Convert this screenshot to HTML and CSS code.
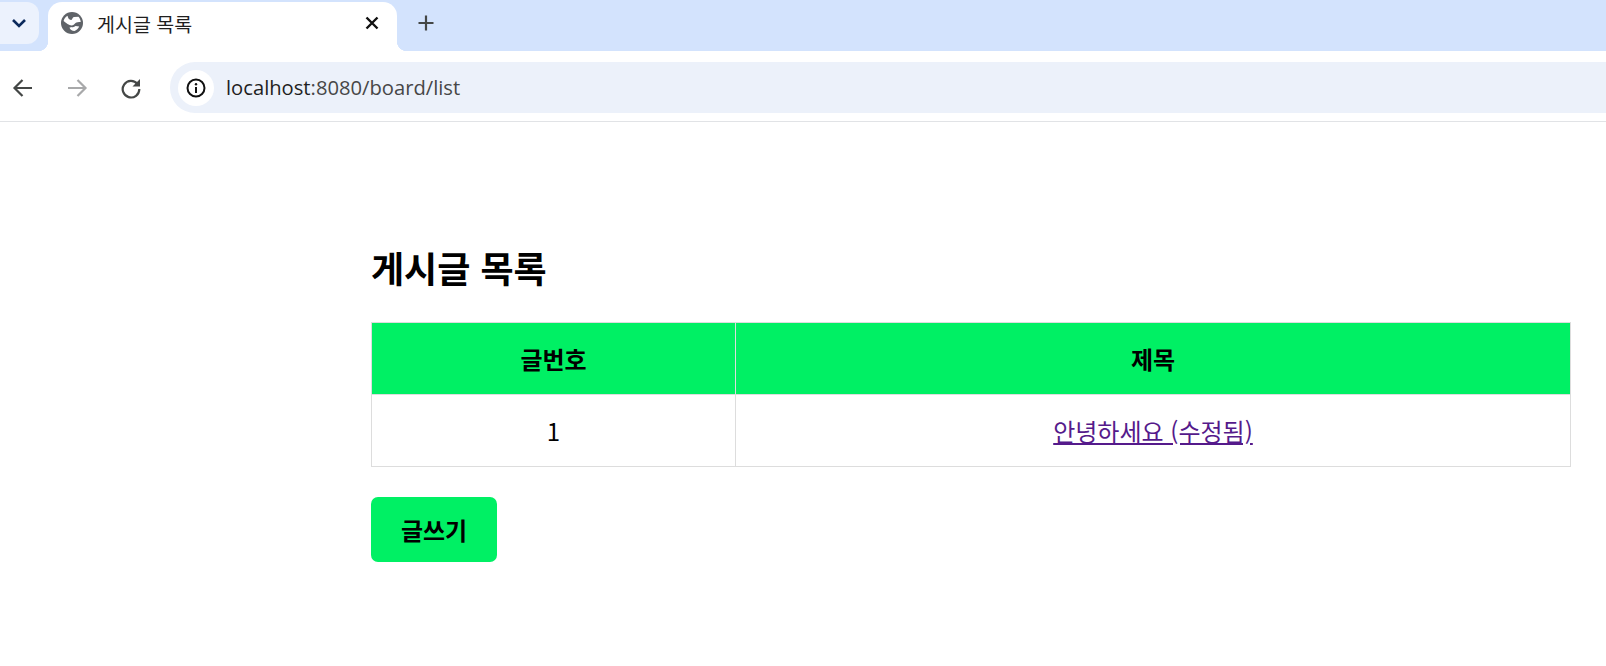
FILE: index.html
```html
<!DOCTYPE html>
<html lang="ko">
<head>
    <meta charset="UTF-8">
    <title>게시글 목록</title>
    <link rel="stylesheet" href="styles.css">
</head>
<body>
    <div class="tab-strip">
        <div class="tab-search">
            <svg width="16" height="16" viewBox="0 0 16 16"><path d="M2 5 8 11 14 5" fill="none" stroke="#0b2a5c" stroke-width="2.6"/></svg>
        </div>
        <div class="tab">
            <svg class="favicon" width="22" height="22" viewBox="0 0 22 22">
                <circle cx="11" cy="11" r="11" fill="#5f6368"/>
                <path d="M2.600 9 C3 7 4.500 5 6.500 3.800 C7 6 8 8 10 8 C11.500 8 11 5.500 13 5 L17.500 4.800 C19 6.500 19.700 8.500 19.700 10 C17.500 10 15.500 10 14.500 11 C13 12.500 12.500 13.500 10.500 13.500 C8 13.500 5 11 2.600 9 Z" fill="#fff"/>
                <path d="M8.500 15.500 C11 15 13 15.500 14.500 14 L18.200 14.500 C17.200 16.500 15.500 18 13.500 19 C11 19 9 17.500 8.500 15.500 Z" fill="#fff"/>
            </svg>
            <span class="tab-title">게시글 목록</span>
            <svg class="tab-close" width="14" height="14" viewBox="0 0 14 14"><path d="M1.500 1.500 12.500 12.500 M12.500 1.500 1.500 12.500" stroke="#111" stroke-width="2.400"/></svg>
        </div>
        <svg class="new-tab" width="16" height="16" viewBox="0 0 16 16"><path d="M8 0.500V15.500 M0.500 8H15.500" stroke="#444746" stroke-width="2.200"/></svg>
    </div>

    <div class="toolbar">
        <svg class="nav-icon" width="22" height="22" viewBox="0 0 22 22"><path d="M20 11H3.500 M10.500 3 2.500 11 10.500 19" fill="none" stroke="#444746" stroke-width="2.200"/></svg>
        <svg class="nav-icon" width="22" height="22" viewBox="0 0 22 22"><path d="M2 11H18.500 M11.500 3 19.500 11 11.500 19" fill="none" stroke="#a8a9aa" stroke-width="2.200"/></svg>
        <svg class="nav-icon" width="22" height="22" viewBox="0 0 22 22"><path d="M17.500 7A8.300 8.300 0 1 0 19.300 12" fill="none" stroke="#444746" stroke-width="2.200"/><path d="M20 2V9.500H12.500Z" fill="#444746"/></svg>
        <div class="omnibox">
            <div class="site-info">
                <svg width="20" height="20" viewBox="0 0 20 20"><circle cx="10" cy="10" r="8.500" fill="none" stroke="#111" stroke-width="2"/><path d="M10 9V15" stroke="#111" stroke-width="2"/><circle cx="10" cy="6.200" r="1.200" fill="#111"/></svg>
            </div>
            <span class="url"><span class="url-host">localhost</span>:8080/board/list</span>
        </div>
    </div>

    <div class="container">
        <h2>게시글 목록</h2>
        <table class="board-table">
            <thead>
                <tr>
                    <th class="col-no">글번호</th>
                    <th>제목</th>
                </tr>
            </thead>
            <tbody>
                <tr>
                    <td>1</td>
                    <td><a href="#">안녕하세요 (수정됨)</a></td>
                </tr>
            </tbody>
        </table>
        <a class="write-btn" href="#">글쓰기</a>
    </div>
</body>
</html>
```

FILE: styles.css
```css
body {
    font-family: "Noto Sans CJK KR", "Noto Sans", sans-serif;
    background-color: #fff;
    color: #000;
    margin: 0;
    height: 666px;
    overflow: hidden;
}

.tab-strip {
    display: flex;
    align-items: flex-start;
    height: 49px;
    padding-top: 2px;
    background-color: #d3e3fd;
}

.tab-search {
    display: flex;
    align-items: center;
    justify-content: center;
    width: 38px;
    height: 42px;
    padding-right: 1px;
    background-color: #ecf2fd;
    border-radius: 0 12px 12px 0;
}

.tab {
    position: relative;
    display: flex;
    align-items: center;
    width: 349px;
    height: 49px;
    margin-left: 9px;
    background-color: #fff;
    border-radius: 14px 14px 0 0;
}

.tab::before,
.tab::after {
    content: "";
    position: absolute;
    bottom: 0;
    width: 10px;
    height: 10px;
}

.tab::before {
    left: -10px;
    background: radial-gradient(circle at 0 0, #d3e3fd 10px, #fff 10.5px);
}

.tab::after {
    right: -10px;
    background: radial-gradient(circle at 100% 0, #d3e3fd 10px, #fff 10.5px);
}

.favicon {
    margin-left: 13px;
    margin-bottom: 7px;
}

.tab-title {
    margin-left: 14px;
    margin-bottom: 7px;
    font-size: 19.5px;
    color: #1f1f1f;
    flex: 1;
}

.tab-close {
    margin-right: 18px;
    margin-bottom: 7px;
}

.new-tab {
    margin: 13px 0 0 21px;
}

.toolbar {
    display: flex;
    align-items: center;
    height: 70px;
    padding-left: 12px;
    border-bottom: 1px solid #e1e3e6;
}

.nav-icon {
    margin-top: 3px;
    margin-right: 32px;
    flex-shrink: 0;
}

.nav-icon:nth-child(3) {
    margin-right: 28px;
}

.omnibox {
    display: flex;
    align-items: center;
    flex: 1;
    height: 51px;
    margin-top: 3px;
    padding-left: 8px;
    background-color: #ecf1fa;
    border-radius: 25px 0 0 25px;
}

.site-info {
    display: flex;
    align-items: center;
    justify-content: center;
    width: 36px;
    height: 36px;
    background-color: #fff;
    border-radius: 50%;
}

.url {
    margin-left: 12px;
    margin-bottom: 2px;
    font-family: "Open Sans", "Noto Sans", sans-serif;
    font-size: 20.2px;
    color: #474747;
}

.url-host {
    color: #1f1f1f;
}

.container {
    padding: 119px 35px 0 371px;
}

h2 {
    margin: 0 0 29px;
    font-size: 36px;
    line-height: 52px;
    font-weight: 700;
}

.board-table {
    width: 1200px;
    border-collapse: collapse;
    margin-bottom: 30px;
}

.board-table th,
.board-table td {
    height: 71px;
    padding: 0;
    border: 1px solid #ddd;
    text-align: center;
    font-size: 24px;
}

.board-table th {
    background-color: #00f064;
    font-weight: 700;
}

.col-no {
    width: 363px;
}

.board-table a {
    color: #551a8b;
}

.write-btn {
    display: block;
    width: 126px;
    height: 65px;
    line-height: 65px;
    text-align: center;
    background-color: #00f064;
    border-radius: 7px;
    color: #000;
    font-size: 24px;
    font-weight: 700;
    text-decoration: none;
}
```
